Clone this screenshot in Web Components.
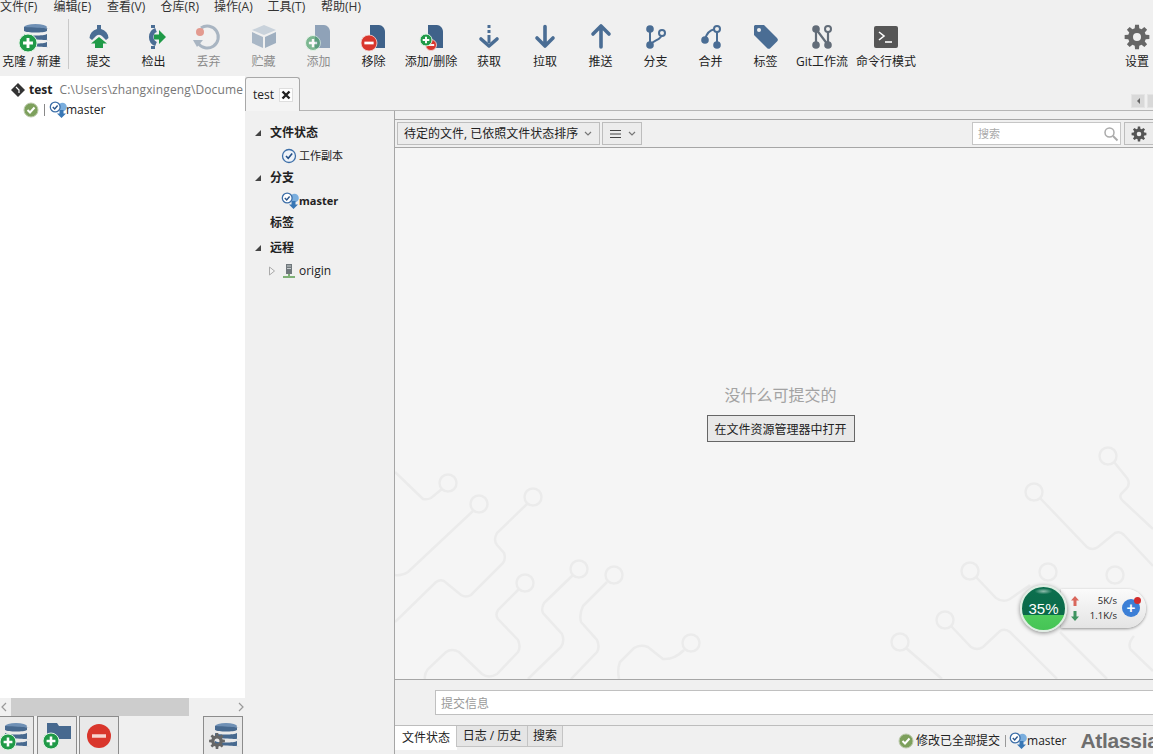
<!DOCTYPE html>
<html lang="zh"><head><meta charset="utf-8"><title>SourceTree</title>
<style>
html,body{margin:0;padding:0;width:1153px;height:754px;overflow:hidden;background:#f0f0f0}
body{font:12px/16px "Open Sans","Noto Sans CJK SC",sans-serif;color:#222}
</style></head>
<body>
<sg-app></sg-app>
<script>
const B='#4a6d94',G='#1f9a47',R='#d9362c';
function gear(cx,cy,R1,R2,h,n=8){let d='';const st=Math.PI*2/n;
 for(let i=0;i<n;i++){const a=i*st-Math.PI/2,w=st*.2,w2=st*.3;
  const p=[[R2,a-w2-.02],[R1,a-w],[R1,a+w],[R2,a+w2+.02]];
  p.forEach((q,j)=>{d+=(i==0&&j==0?'M':'L')+(cx+q[0]*Math.cos(q[1])).toFixed(2)+' '+(cy+q[0]*Math.sin(q[1])).toFixed(2)});}
 d+=`ZM${cx+h} ${cy}a${h} ${h} 0 1 0 ${-2*h} 0a${h} ${h} 0 1 0 ${2*h} 0Z`;return d;}
const plus=(x,y,r,c=G,o=1)=>`<g opacity="${o}"><circle cx="${x}" cy="${y}" r="${r}" fill="${c}" stroke="#dff3e4" stroke-width="1"/><path d="M${x-r*.55} ${y}H${x+r*.55}M${x} ${y-r*.55}V${y+r*.55}" stroke="#fff" stroke-width="${r*.32}"/></g>`;
const minus=(x,y,r)=>`<circle cx="${x}" cy="${y}" r="${r}" fill="${R}" stroke="#f4d8d5" stroke-width=".8"/><path d="M${x-r*.58} ${y}H${x+r*.58}" stroke="#fff" stroke-width="${r*.34}"/>`;
const db=(x,y,w,c='#47698f')=>`<ellipse cx="${x+w/2}" cy="${y+3}" rx="${w/2}" ry="3" fill="#6f90b5"/><path d="M${x} ${y+3}v4c3 2 ${w-3} 2 ${w} 0v-4c-3 2 ${w-3} 2 ${-w} 0z" fill="${c}"/><path d="M${x} ${y+10}c3 2 ${w-3} 2 ${w} 0v5c-3 2 ${w-3} 2 ${-w} 0z" fill="${c}"/><path d="M${x} ${y+18}c3 2 ${w-3} 2 ${w} 0v4c-3 2 ${w-3} 2 ${-w} 0z" fill="${c}"/>`;
const doc=(o=1,c='#3f628a')=>`<path d="M14 3h9c3 0 6 3 6 7v16H14z" fill="${c}" opacity="${o}"/>`;
const arrow=(p)=>`<path d="${p}" fill="none" stroke="${B}" stroke-width="3.6" stroke-linecap="round" stroke-linejoin="round"/>`;
const node=(x,y,h,c=B)=>h?`<circle cx="${x}" cy="${y}" r="3" fill="#f0f0f0" stroke="${c}" stroke-width="2"/>`:`<circle cx="${x}" cy="${y}" r="3.8" fill="${c}"/>`;
const ICONS={
 clone:[36,30,db(10,2,23)+plus(14,21,9)],
 commit:[36,30,`<path d="M16 3h4v4a9.500 9.500 0 0 1 7.500 9l-2.500 2-3.500-3.500a4.500 4.500 0 0 0-7 0L11 18l-2.500-2A9.500 9.500 0 0 1 16 7z" fill="${B}"/><path d="M18 15l8 6.500h-4V26h-8v-4.500h-4z" fill="${G}"/>`],
 checkout:[36,30,`<path d="M15 3h4v3H15zM15 24h4v3H15z" fill="${B}"/><path d="M20 8a7.500 7.500 0 0 0 0 14" fill="none" stroke="${B}" stroke-width="4.500"/><path d="M18 12.500h5V8l7 7-7 7v-4.500h-5z" fill="${G}"/>`],
 discard:[36,30,`<path d="M10 6a11 11 0 1 1-3 15" fill="none" stroke="#a9b5c2" stroke-width="3"/><path d="M2 18h10l-6 7z" fill="#a9b5c2"/><circle cx="9" cy="10" r="4" fill="#e39a8f"/>`],
 stash:[36,30,`<path d="M18 3l12 5-12 5-12-5z" fill="#c9d2db"/><path d="M6 10l11 5v11L6 21z" fill="#a9b7c6"/><path d="M19 15l11-5v11l-11 5z" fill="#9fafc0"/>`],
 add:[36,30,doc(.55)+plus(12,21,7.5,'#3f9a5f',.65)],
 remove:[36,30,doc()+minus(13,21,8)],
 addremove:[36,30,`<path d="M15 3h9c3 0 6 3 6 7v16H15z" fill="#3f628a"/>`+minus(18,23,5.500)+plus(13,18,6)],
 fetch:[36,30,`<rect x="16.500" y="3" width="3" height="3" fill="${B}"/><rect x="16.500" y="8" width="3" height="3" fill="${B}"/><rect x="16.500" y="13" width="3" height="8" fill="${B}"/>`+arrow('M10 17l8 7 8-7')],
 pull:[36,30,arrow('M18 4.500V23M10 16l8 8 8-8')],
 push:[36,30,arrow('M18 25V5M10 12l8-8 8 8')],
 branch:[36,30,`<path d="M12 7v16M24 12c0 6-9 6-12 11" fill="none" stroke="${B}" stroke-width="2"/>`+node(12,7)+node(12,23)+node(24,11,1)],
 merge:[36,30,`<path d="M24 7v16M22 7c-5 1-9 5-10 11" fill="none" stroke="${B}" stroke-width="2"/>`+node(24,7,1)+node(24,23)+node(12,18)],
 tag:[36,30,`<path d="M7 3h9l13 13a2.500 2.500 0 0 1 0 3.500l-6.500 6.500a2.500 2.500 0 0 1-3.500 0L6 13V4z" fill="${B}"/><circle cx="11" cy="8" r="2" fill="#f0f0f0"/>`],
 gitflow:[36,30,`<path d="M12 7v16M24 7v16M12 7l12 16" fill="none" stroke="#626c78" stroke-width="2.200"/>`+node(12,7,0,'#626c78')+node(24,7,1,'#626c78')+node(12,23,0,'#626c78')+node(24,23,0,'#626c78')],
 terminal:[36,30,`<rect x="6" y="4" width="24" height="22" rx="2" fill="#565656"/><path d="M11 10l5 4-5 4" fill="none" stroke="#fff" stroke-width="1.600"/><path d="M17 20h7" stroke="#fff" stroke-width="1.600"/>`],
 settings:[36,30,`<path d="${gear(18,15,12.500,9,4)}" fill="#666" fill-rule="evenodd"/>`],
 gearS:[16,16,`<path d="${gear(8,8,7.500,5.500,2.300)}" fill="#555" fill-rule="evenodd"/>`],
 repo:[16,16,`<path d="M8 1l7 7-7 7-7-7z" fill="#333"/><path d="M6 5l3 3v3" fill="none" stroke="#fff" stroke-width="1.200"/>`],
 ok:[16,16,`<circle cx="8" cy="8" r="7" fill="#7da05c" stroke="#bccaac"/><path d="M4.500 8l2.500 2.500 4.500-5" fill="none" stroke="#fff" stroke-width="2"/>`],
 br:[18,18,`<circle cx="13.500" cy="6" r="4.300" fill="#7aaede"/><path d="M10.500 9h4v3.500h2.500l-4.500 4.500-4.500-4.500h2.500z" fill="#3877b5"/><circle cx="6.200" cy="6" r="4.900" fill="#fff" stroke="#3d6fa8" stroke-width="1.300"/><path d="M3.800 6l1.900 1.900 2.900-3.400" fill="none" stroke="#2a568c" stroke-width="1.400"/>`],
 wc:[16,16,`<circle cx="8" cy="8" r="6.500" fill="#eef3f9" stroke="#3d6fa8" stroke-width="1.300"/><path d="M5 8l2.200 2.200L11.200 5.500" fill="none" stroke="#234f86" stroke-width="1.600"/>`],
 pc:[16,16,`<rect x="5" y="1" width="6" height="10" fill="#70787c"/><rect x="6" y="2.500" width="4" height="1" fill="#c8cdd0"/><rect x="6" y="5" width="4" height="1" fill="#c8cdd0"/><path d="M8 11v2M2 14h12" stroke="#5a9a4f" stroke-width="1.500"/>`],
 search:[16,16,`<circle cx="6.500" cy="6.500" r="4.500" fill="none" stroke="#aaa" stroke-width="1.500"/><path d="M10 10l4.500 4.500" stroke="#aaa" stroke-width="2"/>`],
 list:[14,10,`<path d="M1 1.500h11M1 5h11M1 8.500h11" stroke="#444" stroke-width="1.200"/>`],
 chev:[8,6,`<path d="M1 1l3 3 3-3" fill="none" stroke="#777" stroke-width="1.200"/>`],
 triD:[8,8,`<path d="M7 1v6H1z" fill="#444"/>`],
 triR:[8,10,`<path d="M1.500 1l5 4-5 4z" fill="#f4f4f4" stroke="#aaa"/>`],
 lt:[8,12,`<path d="M6 2L2 6l4 4" fill="none" stroke="#999" stroke-width="1.200"/>`],
 gt:[8,12,`<path d="M2 2l4 4-4 4" fill="none" stroke="#999" stroke-width="1.200"/>`],
 x:[10,10,`<path d="M1.500 1.500l7 7M8.500 1.500l-7 7" stroke="#222" stroke-width="2.400"/>`],
 bClone:[34,38,db(6,7,22)+plus(9,26,8)],
 bFolder:[40,38,`<path d="M10 7h10l2 3h12v13H10z" fill="#47698f"/>`+plus(14,25,8)],
 bDel:[40,38,`<circle cx="20" cy="20" r="12" fill="${R}"/><path d="M13 20h14" stroke="#f7d5d0" stroke-width="3.500"/>`],
 bSet:[40,38,db(12,7,22)+`<path d="${gear(14,25,8,5.800,2.500)}" fill="#666" fill-rule="evenodd"/>`],
 up:[8,10,`<path d="M4 0l4 4.500H5.500V10h-3V4.500H0z" fill="#d9675c"/>`],
 down:[8,10,`<path d="M4 10l4-4.500H5.500V0h-3v5.500H0z" fill="#3f9460"/>`]
};
function def(name,css,html,extra){
 customElements.define(name,class extends HTMLElement{
  connectedCallback(){ if(this.shadowRoot) return;
   const s=this.attachShadow({mode:'open'});
   s.innerHTML=`<style>${css}</style>`+(typeof html==='function'?html(this):html);
  }});
}
customElements.define('sg-icon',class extends HTMLElement{
 connectedCallback(){ if(this.shadowRoot) return;
  const [w,h,c]=ICONS[this.getAttribute('name')];
  this.attachShadow({mode:'open'}).innerHTML=`<style>:host{display:inline-flex;flex:none;width:${w}px;height:${h}px}svg{display:block;overflow:visible}</style><svg width="${w}" height="${h}" viewBox="0 0 ${w} ${h}">${c}</svg>`;
 }});

def('sg-menu',`:host{display:flex;height:14px;line-height:13px}
 span{width:53.500px;flex:none;white-space:nowrap;color:#333}
 span:first-child{width:53px}`,
 ['文件(F)','编辑(E)','查看(V)','仓库(R)','操作(A)','工具(T)','帮助(H)'].map(t=>`<span>${t}</span>`).join(''));

def('sg-tool',`:host{display:flex;flex-direction:column;align-items:center;flex:none;padding-top:8px;box-sizing:border-box;height:62px}
 .l{margin-top:2px;line-height:16px;white-space:nowrap;color:#222}:host([dim]) .l{color:#8c8c8c}`,
 t=>`<sg-icon name="${t.getAttribute('icon')}"></sg-icon><div class="l"><slot></slot></div>`);

def('sg-toolbar',`:host{display:flex;height:62px}
 .sep{width:1px;height:50px;margin:5px 2px 0 5px;background:#c9c9c9;flex:none}
 .sp{flex:1}`,
 ()=>{const t=(w,i,l,d)=>`<sg-tool style="width:${w}px" icon="${i}" ${d?'dim':''}>${l}</sg-tool>`;
  return t(63,'clone','克隆 / 新建')+'<div class="sep"></div>'+t(55,'commit','提交')+t(55,'checkout','检出')+t(55,'discard','丢弃',1)+t(55,'stash','贮藏',1)+t(55,'add','添加',1)+t(55,'remove','移除')+t(60,'addremove','添加/删除')+t(56,'fetch','获取')+t(56,'pull','拉取')+t(55,'push','推送')+t(55,'branch','分支')+t(55,'merge','合并')+t(55,'tag','标签')+t(58,'gitflow','Git工作流')+t(70,'terminal','命令行模式')+'<div class="sp"></div>'+t(32,'settings','设置');});

def('sg-left',`:host{display:flex;flex-direction:column;height:678px;background:#f0f0f0}
 .tree{flex:1;background:#fff;padding-top:3px;overflow:hidden;min-height:0}
 .r1,.r2{display:flex;align-items:center;white-space:nowrap;overflow:hidden}
 .r1{height:21px;padding-left:10px;width:245px;box-sizing:border-box}.r1 b{margin:0 7px 0 3px;color:#222}.r1 span{color:#777;letter-spacing:.13px}
 .r2{height:20px;padding-left:23px}.bar{width:1px;height:12px;background:#888;margin:0 4px 0 5px;flex:none}
 .r2 sg-icon+span{margin-left:-1px}
 .sb{height:18px;display:flex;align-items:center;background:#f0f0f0;flex:none}
 .thumb{width:178px;height:18px;background:#cdcdcd;margin:0 48px 0 3px;flex:none}
 .btns{height:38px;flex:none;display:flex;padding-right:2px}
 .b{box-sizing:border-box;height:38px;background:#e9e9e9;border:1px solid #8c8c8c;border-bottom:0;flex:none;display:flex}
 .b sg-icon{margin:-1px}`,
 `<div class="tree"><div class="r1"><sg-icon name="repo"></sg-icon><b>test</b><span>C:\\Users\\zhangxingeng\\Docume</span></div>
  <div class="r2"><sg-icon name="ok"></sg-icon><div class="bar"></div><sg-icon name="br"></sg-icon><span>master</span></div></div>
  <div class="sb"><sg-icon name="lt"></sg-icon><div class="thumb"></div><sg-icon name="gt"></sg-icon></div>
  <div class="btns"><div class="b" style="width:34px;border-left:0"><sg-icon name="bClone"></sg-icon></div><div class="b" style="width:40px;margin-left:3px"><sg-icon name="bFolder"></sg-icon></div><div class="b" style="width:40px;margin-left:2px"><sg-icon name="bDel"></sg-icon></div><div class="b" style="width:40px;margin-left:84px"><sg-icon name="bSet"></sg-icon></div></div>`);

def('sg-tabs',`:host{display:flex;height:35px;box-sizing:border-box;border-bottom:1px solid #b5b5b5;align-items:flex-end}
 .tab{width:55px;height:34px;box-sizing:border-box;border:1px solid #a8a8a8;border-bottom:0;border-radius:3px 3px 0 0;background:#f4f4f4;display:flex;align-items:center;padding-left:7px;margin-bottom:-1px}
 .c{margin-left:5px;width:14px;height:14px;box-sizing:border-box;border:1px solid #dedede;background:#fff;display:flex;align-items:center;justify-content:center}
 .nav{margin:0 0 2px auto;display:flex;gap:2px;width:22px;overflow:hidden}
 .n{width:14px;height:14px;flex:none;background:#d9d9d9;border:1px solid #e4e4e4;box-sizing:border-box;display:flex;align-items:center;justify-content:center}
 i{width:0;height:0;border:3px solid transparent;border-right-color:#666;margin-left:-3px;display:block}
 u{width:0;height:0;border:3px solid transparent;border-left-color:#666;margin-left:3px;display:block}`,
 `<div class="tab">test<div class="c"><sg-icon name="x"></sg-icon></div></div><div class="nav"><div class="n"><i></i></div><div class="n"><u></u></div></div>`);

def('sg-nav-row',`:host{display:flex;height:22.500px;align-items:center;box-sizing:border-box;white-space:nowrap}
 :host([h]){padding-left:9px}:host([c]){padding-left:36px;font-size:11px}
 :host([o]){padding-left:23px}
 .t{width:16px;flex:none;display:flex}:host([o]) .t{width:13px}
 .ic{display:flex;width:18px;flex:none}
 :host([h]) .l{font-weight:700;color:#222}:host([b]) .l{font-weight:700}`,
 t=>{const ar=t.getAttribute('arrow'),ic=t.getAttribute('icon');
  return (ar!==null?`<span class="t">${ar?`<sg-icon name="${ar}"></sg-icon>`:''}</span>`:'')+(ic?`<span class="ic"><sg-icon name="${ic}"></sg-icon></span>`:'')+`<span class="l"><slot></slot></span>`;});

def('sg-side',`:host{display:block;width:149px;flex:none;padding-top:11px;box-sizing:border-box}
 .gap{margin-bottom:2.500px}`,
 `<sg-nav-row h arrow="triD">文件状态</sg-nav-row><sg-nav-row c icon="wc">工作副本</sg-nav-row>
  <sg-nav-row h arrow="triD">分支</sg-nav-row><sg-nav-row c b icon="br">master</sg-nav-row>
  <sg-nav-row class="gap" h arrow="">标签</sg-nav-row><sg-nav-row h arrow="triD">远程</sg-nav-row>
  <sg-nav-row o arrow="triR" icon="pc">origin</sg-nav-row>`);

def('sg-filter',`:host{display:flex;height:29px;box-sizing:border-box;border-top:1px solid #a6a6a6;border-bottom:1px solid #a6a6a6;align-items:center;padding-left:2px;background:#f0f0f0}
 .dd{box-sizing:border-box;height:23px;border:1px solid #bdbdbd;background:#ececec;display:flex;align-items:center;justify-content:space-between;padding:0 5px 0 6px;flex:none}
 .s{box-sizing:border-box;width:149px;height:23px;border:1px solid #c6c6c6;background:#fff;margin-left:auto;display:flex;align-items:center;justify-content:space-between;padding:0 1px 0 5px;color:#aaa;font-size:11px}
 .g{box-sizing:border-box;width:29px;height:23px;border:1px solid #bdbdbd;border-right:0;background:#ececec;margin-left:3px;display:flex;align-items:center;justify-content:center;flex:none}`,
 `<div class="dd" style="width:203px;padding-right:7px">待定的文件, 已依照文件状态排序<sg-icon name="chev"></sg-icon></div><div class="dd" style="width:40px;margin-left:2px"><sg-icon name="list"></sg-icon><sg-icon name="chev"></sg-icon></div>
  <div class="s">搜索<sg-icon name="search"></sg-icon></div><div class="g"><sg-icon name="gearS"></sg-icon></div>`);

const circuits=[
 [448,483,'M395 472L423 499Q427 500 431 498L442 489'],
 [479,504,'M473 511L408 572Q402 576 395 575'],
 [533,497,'M527 504L497 533Q493 540 497 545L504 553Q506 559 503 563L471 595Q466 598 461 595L444 581Q440 579 436 582L395 622'],
 [525,583,'M519 589L498 610Q495 615 498 619L518 640Q521 647 518 652L497 674Q489 679 482 674L459 652Q452 648 446 652L428 669Q424 674 425 679'],
 [579,569,'M573 575L544 603Q541 609 543 613L562 634Q565 641 561 647L528 679'],
 [614,575,'M607 582L583 606Q579 615 581 622L597 640Q600 647 597 652L571 679'],
 [691,643,'M684 650Q674 660 663 659L648 647Q640 644 634 648L620 662Q617 669 619 679'],
 [1108,456,'M1114 462L1127 478Q1131 484 1126 489L1121 494Q1119 498 1123 501L1153 529'],
 [1034,492,'M1040 498L1087 547Q1092 551 1098 547L1115 533Q1120 531 1124 535L1153 566'],
 [970,571,'M976 577L996 598Q1003 603 1010 599L1030 585'],
 [1048,572,''],[1115,575,''],
 [945,620,'M951 626L971 647Q977 651 983 647L1000 631Q1005 628 1010 632L1057 679'],
 [900,642,'M906 648L942 679'],
 [0,0,'M1060 632L1107 679M1134 636Q1127 644 1131 650L1153 671']
];
const circSvg=circuits.map(([x,y,d])=>(x?`<circle cx="${x}" cy="${y}" r="8.500"/>`:'')+(d?`<path d="${d}"/>`:'')).join('');

def('sg-speed',`:host{position:absolute;right:7px;top:436px;width:126px;height:48px;display:flex;align-items:center;color:#222}
 .ball{box-sizing:border-box;width:47px;height:47px;border-radius:50%;flex:none;z-index:1;border:2px solid #dfeee3;box-shadow:0 1px 4px rgba(0,0,0,.45);
  background:radial-gradient(ellipse 9px 3px at 50% 10%,rgba(255,255,255,.55),transparent),linear-gradient(#0c6f4e 0,#0a6a49 66%,#4ecb5c 66%,#45c455 100%);
  color:#fff;font:15px/43px "Liberation Sans",sans-serif;text-align:center;display:block}
 .pill{box-sizing:border-box;margin-left:-6px;flex:1;height:39px;border-radius:0 20px 20px 0;background:linear-gradient(#fbfbfb,#e4e4e4);box-shadow:0 1px 3px rgba(0,0,0,.4);display:flex;align-items:center;padding-left:10px}
 .ar{display:flex;flex-direction:column;gap:5px;flex:none}
 .t{width:38px;text-align:right;font:9.500px/15px "Open Sans",sans-serif;flex:none}
 .p{width:18px;height:18px;border-radius:50%;background:#3c7fd6;color:#fff;margin-left:5px;flex:none;position:relative;display:flex;align-items:center;justify-content:center;font:bold 15px/18px "Liberation Sans",sans-serif}
 .d{position:absolute;width:7px;height:7px;background:#d22c2c;border-radius:50%;right:-1px;top:-2px}`,
 `<div class="ball">35%</div><div class="pill"><div class="ar"><sg-icon name="up"></sg-icon><sg-icon name="down"></sg-icon></div><div class="t">5K/s<br>1.1K/s</div><div class="p">+<div class="d"></div></div></div>`);

def('sg-canvas',`:host{flex:1;min-height:0;background:#f5f5f5;display:grid;position:relative;overflow:hidden}
 svg{grid-area:1/1;display:block}
 .m{grid-area:1/1;display:flex;flex-direction:column;align-items:center;justify-content:center;padding-left:13px}
 .t{font-size:16px;line-height:20px;color:#a3a3a3;margin-bottom:10px}
 .b{box-sizing:border-box;width:148px;height:27px;border:1px solid #666;background:#e8e8e8;text-align:center;line-height:27px;color:#222}`,
 `<svg width="758" height="531" viewBox="395 148 758 531" fill="none" stroke="#ebebeb" stroke-width="2.500">${circSvg}</svg>
  <div class="m"><div class="t">没什么可提交的</div><div class="b">在文件资源管理器中打开</div></div><sg-speed></sg-speed>`);

def('sg-commit',`:host{display:block;height:46px;box-sizing:border-box;border-top:1px solid #a6a6a6;padding:10px 0 0 40px;background:#f0f0f0}
 .i{box-sizing:border-box;height:25px;background:#fff;border:1px solid #c0c0c0;border-right:0;color:#9a9a9a;padding-left:5px;line-height:25px}`,
 `<div class="i">提交信息</div>`);

def('sg-status',`:host{display:flex;height:29px;box-sizing:border-box;border-top:1px solid #bdbdbd;overflow:hidden;white-space:nowrap}
 .tabs{display:flex;height:21px;flex:none}
 .tb{box-sizing:border-box;height:21px;border:1px solid #c4c4c4;border-top:0;background:#e5e5e5;text-align:center;line-height:20px;margin-left:-1px}
 .a{background:#fff;height:24px;line-height:23px;margin:0;border:0}
 .st{margin-left:auto;display:flex;align-items:center;height:29px;width:255px;flex:none;padding-top:1px;box-sizing:border-box}
 .bar{width:1px;height:12px;background:#999;margin:0 3px 0 5px;flex:none}
 .at{font:bold 21px/28px "Liberation Sans",sans-serif;color:#6e6e6e;margin-left:14px;letter-spacing:-.3px}`,
 `<div class="tabs"><div class="tb a" style="width:62px">文件状态</div><div class="tb" style="width:72px">日志 / 历史</div><div class="tb" style="width:36px">搜索</div></div>
  <div class="st"><sg-icon name="ok"></sg-icon><span style="margin-left:2px">修改已全部提交</span><div class="bar"></div><sg-icon name="br" ></sg-icon><span>master</span><span class="at">Atlassian</span></div>`);

def('sg-main',`:host{flex:1;min-width:0;display:flex;flex-direction:column;border-left:1px solid #a6a6a6;padding-top:8px;box-sizing:border-box}`,
 `<sg-filter></sg-filter><sg-canvas></sg-canvas><sg-commit></sg-commit><sg-status></sg-status>`);

def('sg-right',`:host{display:flex;flex-direction:column;height:678px;min-width:0}
 .body{flex:1;display:flex;min-height:0}`,
 `<sg-tabs></sg-tabs><div class="body"><sg-side></sg-side><sg-main></sg-main></div>`);

def('sg-app',`:host{display:grid;grid-template-rows:14px 62px 678px;width:1153px;height:754px;overflow:hidden}
 .w{display:grid;grid-template-columns:245px 908px;min-height:0}`,
 `<sg-menu></sg-menu><sg-toolbar></sg-toolbar><div class="w"><sg-left></sg-left><sg-right></sg-right></div>`);
</script>
</body></html>
